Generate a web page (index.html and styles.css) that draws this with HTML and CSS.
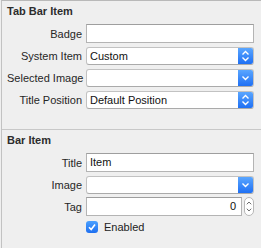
FILE: index.html
```html
<!DOCTYPE html>
<html lang="en">
<head>
    <meta charset="UTF-8">
    <title>Tab Bar Item Inspector</title>
    <link rel="stylesheet" href="styles.css">
</head>
<body>
    <div class="inspector">
        <section class="group">
            <h2 class="group-title">Tab Bar Item</h2>
            <div class="row">
                <label class="row-label">Badge</label>
                <div class="field"></div>
            </div>
            <div class="row">
                <label class="row-label">System Item</label>
                <div class="popup">
                    <span class="popup-value">Custom</span>
                    <span class="popup-button">
                        <svg width="9" height="12" viewBox="0 0 9 12"><path d="M1.5 4.5 L4.5 1.5 L7.5 4.5 M1.5 7.5 L4.5 10.5 L7.5 7.5" fill="none" stroke="#fff" stroke-width="1.4"/></svg>
                    </span>
                </div>
            </div>
            <div class="row">
                <label class="row-label">Selected Image</label>
                <div class="popup">
                    <span class="popup-value"></span>
                    <span class="popup-button">
                        <svg width="9" height="12" viewBox="0 0 9 12"><path d="M1.5 4.5 L4.5 7.5 L7.5 4.5" fill="none" stroke="#fff" stroke-width="1.4"/></svg>
                    </span>
                </div>
            </div>
            <div class="row">
                <label class="row-label">Title Position</label>
                <div class="popup">
                    <span class="popup-value">Default Position</span>
                    <span class="popup-button">
                        <svg width="9" height="12" viewBox="0 0 9 12"><path d="M1.5 4.5 L4.5 1.5 L7.5 4.5 M1.5 7.5 L4.5 10.5 L7.5 7.5" fill="none" stroke="#fff" stroke-width="1.4"/></svg>
                    </span>
                </div>
            </div>
        </section>

        <section class="group">
            <h2 class="group-title">Bar Item</h2>
            <div class="row">
                <label class="row-label">Title</label>
                <div class="field">Item</div>
            </div>
            <div class="row">
                <label class="row-label">Image</label>
                <div class="popup">
                    <span class="popup-value"></span>
                    <span class="popup-button">
                        <svg width="9" height="12" viewBox="0 0 9 12"><path d="M1.5 4.5 L4.5 7.5 L7.5 4.5" fill="none" stroke="#fff" stroke-width="1.4"/></svg>
                    </span>
                </div>
            </div>
            <div class="row">
                <label class="row-label">Tag</label>
                <div class="stepper-field">
                    <div class="field number">0</div>
                    <span class="stepper">
                        <svg width="9" height="17" viewBox="0 0 9 17"><path d="M2 6 L4.5 3.5 L7 6 M2 11 L4.5 13.5 L7 11" fill="none" stroke="#555" stroke-width="1"/></svg>
                    </span>
                </div>
            </div>
            <div class="row check-row">
                <span class="row-label"></span>
                <label class="check">
                    <span class="check-box">
                        <svg width="12" height="12" viewBox="0 0 12 12"><path d="M3 6.2 L5.2 8.5 L9 3.5" fill="none" stroke="#fff" stroke-width="1.6"/></svg>
                    </span>
                    Enabled
                </label>
            </div>
        </section>
    </div>
</body>
</html>
```

FILE: styles.css
```css
* {
    margin: 0;
    padding: 0;
    box-sizing: border-box;
}

body {
    font-family: 'Liberation Sans', Arial, sans-serif;
    font-size: 11px;
    background-color: #efefef;
    color: #222;
}

.inspector {
    margin-left: 1px;
    height: 248px;
    border-top: 1px solid #b9b9b9;
    border-left: 1px solid #c2c2c2;
}

.group {
    padding: 4px 7px 17px 5px;
    border-bottom: 1px solid #c8c8c8;
}

.group:last-child {
    border-bottom: none;
}

.group-title {
    font-size: 11px;
    font-weight: 700;
    line-height: 13px;
    color: #2c2c2c;
    margin-bottom: 6px;
}

.row {
    display: grid;
    grid-template-columns: 75px 1fr;
    column-gap: 4px;
    align-items: center;
    height: 19px;
    margin-bottom: 3px;
}

.row-label {
    text-align: right;
    color: #262626;
    white-space: nowrap;
}

.field {
    height: 19px;
    background-color: #fff;
    border: 1px solid #b4b4b4;
    border-top-color: #9e9e9e;
    padding-left: 3px;
    line-height: 17px;
    color: #111;
}

.field.number {
    flex: 1;
    text-align: right;
    padding-right: 5px;
}

.popup {
    display: flex;
    height: 18px;
    background-color: #fff;
    border: 1px solid #c2c2c2;
    border-bottom-color: #aaa;
    border-radius: 3px;
    overflow: hidden;
}

.popup-value {
    flex: 1;
    padding-left: 3px;
    line-height: 16px;
    color: #111;
}

.popup-button {
    width: 15px;
    display: flex;
    align-items: center;
    justify-content: center;
    background: linear-gradient(#5aa6ff, #1f70f4);
}

.stepper-field {
    display: flex;
    align-items: center;
    gap: 2px;
}

.stepper {
    display: flex;
    width: 10px;
    height: 19px;
    background-color: #fff;
    border: 1px solid #b8b8b8;
    border-radius: 5px;
    align-items: center;
    justify-content: center;
}

.check-row {
    margin-top: 4px;
    height: 13px;
}

.check {
    display: flex;
    align-items: center;
    gap: 6px;
    color: #222;
}

.check-box {
    display: flex;
    width: 12px;
    height: 12px;
    border-radius: 3px;
    background: linear-gradient(#4aa0ff, #1e6ff0);
    align-items: center;
    justify-content: center;
}
```
